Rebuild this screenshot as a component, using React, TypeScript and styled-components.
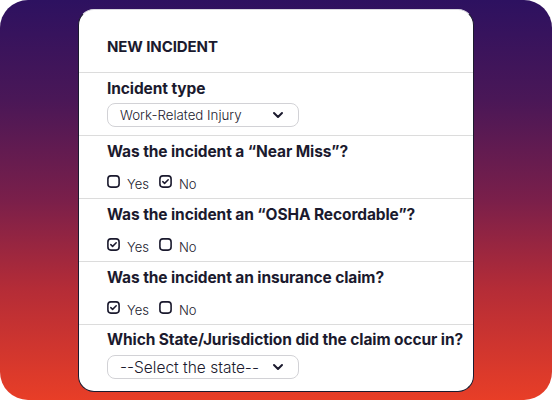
import React from 'react';
import styled, { createGlobalStyle } from 'styled-components';

const GlobalStyle = createGlobalStyle`
  html, body {
    margin: 0;
    padding: 0;
    background: #ffffff;
  }
  * {
    box-sizing: border-box;
  }
`;

const Backdrop = styled.div`
  width: 552px;
  height: 400px;
  border-radius: 28px;
  background: linear-gradient(180deg, #2d1160 0%, #4a1757 25%, #7a1f4a 50%, #b42c37 72%, #e83e27 100%);
  padding: 9px 0 0 78px;
  overflow: hidden;
  font-family: Inter, 'Noto Sans', sans-serif;
  color: #1b1a2e;
`;

const Card = styled.div`
  width: 396px;
  height: 383px;
  background: #ffffff;
  border: 1px solid #1b1a2e;
  border-top-color: #d8d8df;
  border-radius: 16px;
  display: flex;
  flex-direction: column;
  overflow: hidden;
`;

const Header = styled.div`
  height: 63px;
  padding: 27px 28px 0;
  font-size: 15px;
  font-weight: 700;
  letter-spacing: -0.1px;
  border-bottom: 1px solid #dcdcdc;
`;

const Section = styled.div<{ $last?: boolean }>`
  height: 63px;
  padding: ${(p) => (p.$last ? '5px' : '6px')} 28px 0;
  border-bottom: ${(p) => (p.$last ? 'none' : '1px solid #dcdcdc')};
  display: flex;
  flex-direction: column;
  gap: ${(p) => (p.$last ? '5px' : '4px')};
`;

const Label = styled.div`
  font-size: 15.5px;
  font-weight: 700;
  letter-spacing: -0.1px;
  line-height: 20px;
  white-space: nowrap;
`;

const Select = styled.div<{ $large?: boolean }>`
  width: 192px;
  height: 24px;
  border: 1px solid #d2d2d6;
  border-radius: 8px;
  display: flex;
  align-items: center;
  justify-content: space-between;
  padding: 0 14px 0 12px;
  font-size: ${(p) => (p.$large ? '15.5px' : '13.3px')};
  font-weight: 300;
  color: #1b1a2e;
`;

const Options = styled.div`
  display: flex;
  align-items: center;
  height: 20px;
  padding-top: 10px;
`;

const Option = styled.div`
  display: flex;
  align-items: center;
  gap: 7px;
  margin-right: 10px;
  font-size: 13px;
  font-weight: 300;
`;

const OptionText = styled.span`
  position: relative;
  top: 3px;
`;

const Chevron = () => (
  <svg width="12" height="8" viewBox="0 0 12 8">
    <path d="M2 2l4 4 4-4" fill="none" stroke="#1b1a2e" strokeWidth="2" strokeLinecap="round" strokeLinejoin="round" />
  </svg>
);

const Box = ({ checked }: { checked?: boolean }) => (
  <svg width="13" height="13" viewBox="0 0 13 13">
    <rect x="0.9" y="0.9" width="11.2" height="11.2" rx="3" fill="none" stroke="#1b1a2e" strokeWidth="1.6" />
    {checked && (
      <path d="M3.8 6.6l1.8 1.8 3.6-3.6" fill="none" stroke="#1b1a2e" strokeWidth="1.5" strokeLinecap="round" strokeLinejoin="round" />
    )}
  </svg>
);

const YesNo = ({ yes }: { yes: boolean }) => (
  <Options>
    <Option>
      <Box checked={yes} />
      <OptionText>Yes</OptionText>
    </Option>
    <Option>
      <Box checked={!yes} />
      <OptionText>No</OptionText>
    </Option>
  </Options>
);

const App = () => {
  return (
    <>
      <GlobalStyle />
      <Backdrop>
        <Card>
          <Header>NEW INCIDENT</Header>
          <Section>
            <Label>Incident type</Label>
            <Select>
              <span>Work-Related Injury</span>
              <Chevron />
            </Select>
          </Section>
          <Section>
            <Label>Was the incident a “Near Miss”?</Label>
            <YesNo yes={false} />
          </Section>
          <Section>
            <Label>Was the incident an “OSHA Recordable”?</Label>
            <YesNo yes={true} />
          </Section>
          <Section>
            <Label>Was the incident an insurance claim?</Label>
            <YesNo yes={true} />
          </Section>
          <Section $last>
            <Label>Which State/Jurisdiction did the claim occur in?</Label>
            <Select $large>
              <span>--Select the state--</span>
              <Chevron />
            </Select>
          </Section>
        </Card>
      </Backdrop>
    </>
  );
};

export default App;
